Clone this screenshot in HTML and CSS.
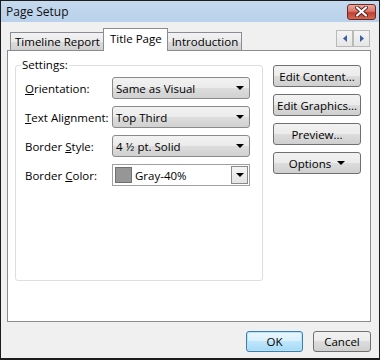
FILE: index.html
```html
<!DOCTYPE html>
<html lang="en">
<head>
    <meta charset="UTF-8">
    <title>Page Setup</title>
    <link rel="stylesheet" href="styles.css">
</head>
<body>
    <div class="window">
        <div class="titlebar">
            <span class="title">Page Setup</span>
            <span class="close">
                <svg width="13" height="11" viewBox="0 0 13 11">
                    <path d="M2 1.5 L11 9.5 M11 1.5 L2 9.5" stroke="#5a2020" stroke-width="4" stroke-linecap="round"/>
                    <path d="M2 1.5 L11 9.5 M11 1.5 L2 9.5" stroke="#fff" stroke-width="2.2" stroke-linecap="round"/>
                </svg>
            </span>
        </div>

        <div class="tabstrip">
            <div class="tabs">
                <div class="tab">Timeline Report</div>
                <div class="tab active">Title Page</div>
                <div class="tab">Introduction</div>
            </div>
            <div class="scroller">
                <span class="arrow"><svg width="4" height="7" viewBox="0 0 4 7"><path d="M4 0 L0 3.5 L4 7 Z" fill="#3b5ea5"/></svg></span>
                <span class="arrow"><svg width="4" height="7" viewBox="0 0 4 7"><path d="M0 0 L4 3.5 L0 7 Z" fill="#3b5ea5"/></svg></span>
            </div>
        </div>

        <div class="panel">
            <fieldset class="group">
                <legend>Settings:</legend>
                <div class="row">
                    <label><u>O</u>rientation:</label>
                    <div class="combo">Same as Visual<span class="caret"></span></div>
                </div>
                <div class="row">
                    <label><u>T</u>ext Alignment:</label>
                    <div class="combo">Top Third<span class="caret"></span></div>
                </div>
                <div class="row">
                    <label>Border <u>S</u>tyle:</label>
                    <div class="combo">4 ½ pt. Solid<span class="caret"></span></div>
                </div>
                <div class="row">
                    <label>Border <u>C</u>olor:</label>
                    <div class="color-combo">
                        <span class="swatch"></span>
                        <span class="color-name">Gray-40%</span>
                        <span class="drop"><span class="caret"></span></span>
                    </div>
                </div>
            </fieldset>

            <div class="side">
                <div class="btn">Edit Content...</div>
                <div class="btn">Edit Graphics...</div>
                <div class="btn">Preview...</div>
                <div class="btn">Options <span class="caret"></span></div>
            </div>
        </div>

        <div class="footer">
            <div class="btn default">OK</div>
            <div class="btn cancel">Cancel</div>
        </div>
    </div>
</body>
</html>
```

FILE: styles.css
```css
body {
    margin: 0;
    font-family: "Open Sans", "DejaVu Sans", sans-serif;
    font-size: 11.5px;
    color: #000;
}

.window {
    width: 380px;
    height: 360px;
    box-sizing: border-box;
    border: 1px solid #1c1c1c;
    border-bottom-width: 2px;
    background: #f0f0f0;
    display: flex;
    flex-direction: column;
}

.titlebar {
    height: 21px;
    display: flex;
    align-items: center;
    justify-content: space-between;
    padding: 0 3px 0 5px;
    background: linear-gradient(#c5d9ef, #b9d1ea);
}
.title { font-size: 12px; color: #111; }
.close {
    width: 29px;
    height: 16px;
    box-sizing: border-box;
    border: 1px solid #6d2a24;
    border-radius: 3px;
    background: linear-gradient(#e9a99c, #d8776a 45%, #c2402f 55%, #cf6a52);
    display: flex;
    align-items: center;
    justify-content: center;
}

.tabstrip {
    margin-top: 6px;
    height: 22px;
    padding: 0 9px 0 9px;
    display: flex;
    justify-content: space-between;
}
.tabs { display: flex; align-items: flex-end; }
.tab {
    height: 17px;
    line-height: 17px;
    padding: 0 3px 0 4px;
    border: 1px solid #898c95;
    border-bottom: none;
    background: linear-gradient(#f2f2f2, #ebebeb 50%, #dddddd 50%, #cfcfcf);
    white-space: nowrap;
}
.tab + .tab { margin-left: -1px; }
.tab.active {
    height: 22px;
    line-height: 19px;
    margin-bottom: -1px;
    padding: 0 5px 0 6px;
    background: #fff;
    position: relative;
    z-index: 1;
}

.scroller { display: flex; margin-top: 2px; }
.arrow {
    width: 17px;
    height: 17px;
    box-sizing: border-box;
    border: 1px solid #b9b9b9;
    background: linear-gradient(#f4f4f4, #e6e6e6);
    display: flex;
    align-items: center;
    justify-content: center;
}

.panel {
    margin: 0 8px 0 6px;
    height: 272px;
    box-sizing: border-box;
    border: 1px solid #898c95;
    background: #fff;
    padding: 6px 0 0 7px;
    display: flex;
    align-items: flex-start;
}

.group {
    margin: 0;
    width: 248px;
    height: 224px;
    box-sizing: border-box;
    padding: 4px 12px 0 9px;
    border: 1px solid #d9dfe4;
    border-radius: 3px;
}
.group legend {
    padding: 0 1px;
    margin-left: -4px;
    line-height: 16px;
}

.row {
    display: flex;
    align-items: center;
    height: 22px;
    margin-bottom: 7px;
}
.row label { width: 87px; white-space: nowrap; }

.combo {
    width: 138px;
    height: 22px;
    box-sizing: border-box;
    border: 1px solid #8a8a8a;
    border-radius: 3px;
    background: linear-gradient(#f2f2f2, #ebebeb 50%, #dddddd 50%, #d1d1d1);
    display: flex;
    align-items: center;
    justify-content: space-between;
    padding: 0 5px 0 3px;
}

.caret {
    display: inline-block;
    width: 0;
    height: 0;
    border-left: 4px solid transparent;
    border-right: 4px solid transparent;
    border-top: 4px solid #000;
}

.color-combo {
    width: 138px;
    height: 22px;
    box-sizing: border-box;
    border: 1px solid #a0a0a0;
    background: #fff;
    display: flex;
    align-items: center;
    padding: 1px 1px 1px 2px;
}
.swatch {
    width: 15px;
    height: 14px;
    border: 1px solid #707070;
    background: #969696;
    margin-right: 3px;
}
.color-name { flex: 1; }
.drop {
    width: 17px;
    height: 18px;
    box-sizing: border-box;
    border: 1px solid #8a8a8a;
    background: linear-gradient(#f4f4f4, #e4e4e4);
    display: flex;
    align-items: center;
    justify-content: center;
}

.side {
    margin: 8px 0 0 10px;
    width: 88px;
    display: flex;
    flex-direction: column;
    gap: 7px;
}

.btn {
    height: 22px;
    box-sizing: border-box;
    border: 1px solid #707070;
    border-radius: 3px;
    background: linear-gradient(#f2f2f2, #ebebeb 50%, #dddddd 50%, #cfcfcf);
    display: flex;
    align-items: center;
    justify-content: center;
    gap: 6px;
    white-space: nowrap;
}

.footer {
    display: flex;
    justify-content: flex-end;
    gap: 10px;
    padding: 9px 8px 0 0;
}
.footer .btn { height: 21px; width: 57px; }
.footer .cancel { width: 58px; }
.btn.default {
    border-color: #3c7fb1;
    background: linear-gradient(#eaf6fd, #d9f0fc 50%, #bee6fd 50%, #a7d9f5);
    box-shadow: inset 0 0 0 1px #b8e2f8;
}
```
